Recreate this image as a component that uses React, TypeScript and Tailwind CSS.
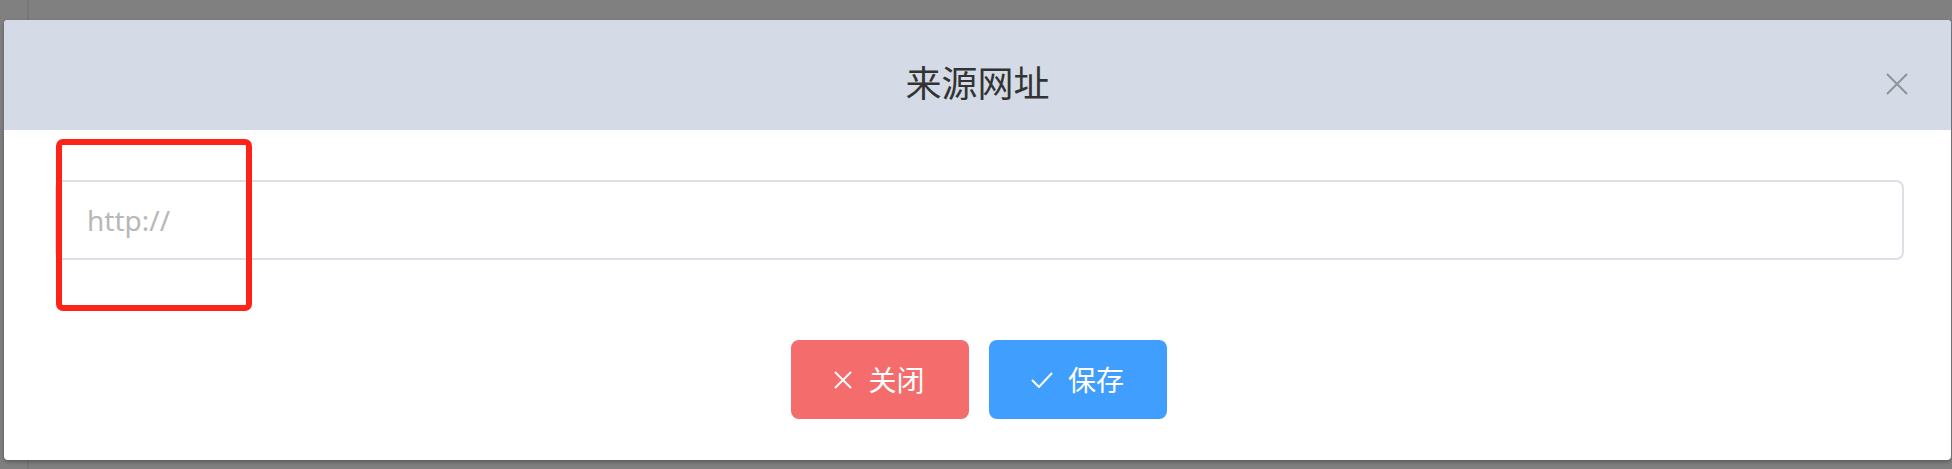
import React from "react";

const cjk = { fontFamily: '"Noto Sans", "Noto Sans CJK SC", sans-serif' };

export default function App() {
  return (
    <div className="relative h-[469px] w-[1952px] overflow-hidden bg-[#808080]" style={cjk}>
      <div className="absolute left-[27px] top-0 h-full w-[2px] bg-[#777779]" />
      <div className="relative ml-[4px] pt-[20px]">
        <div className="flex h-[440px] w-[1947px] flex-col overflow-hidden rounded-[4px] bg-white shadow-[0_2px_4px_rgba(0,0,0,0.3)]">
          <div className="relative flex h-[110px] items-start justify-center bg-[#d4dbe6] pt-[40px]">
            <span className="text-[36px] leading-[48px] text-[#333333]">来源网址</span>
            <svg className="absolute right-[43px] top-[53px]" width="22" height="22" viewBox="0 0 22 22">
              <path d="M1 1 L21 21 M21 1 L1 21" stroke="#8f939a" strokeWidth="2" fill="none" />
            </svg>
          </div>
          <div className="ml-[51px] mr-[47px] mt-[50px] flex h-[80px] items-center rounded-[8px] border-2 border-[#dcdfe6] px-[30px]">
            <span className="text-[28px] text-[#b8b8b8]">http://</span>
          </div>
          <div className="mt-[80px] flex justify-center gap-[20px] pl-[2px]">
            <button className="flex h-[79px] w-[178px] items-center justify-center gap-[16px] rounded-[8px] bg-[#f56c6c] text-[28px] text-white">
              <svg width="18" height="18" viewBox="0 0 18 18">
                <path d="M1 1 L17 17 M17 1 L1 17" stroke="#fff" strokeWidth="2" fill="none" />
              </svg>
              <span>关闭</span>
            </button>
            <button className="flex h-[79px] w-[178px] items-center justify-center gap-[15px] rounded-[8px] bg-[#409eff] text-[28px] text-white">
              <svg width="22" height="16" viewBox="0 0 22 16">
                <path d="M1 8 L8 15 L21 1" stroke="#fff" strokeWidth="2" fill="none" />
              </svg>
              <span>保存</span>
            </button>
          </div>
        </div>
      </div>
      <div className="absolute left-[56px] top-[139px] h-[172px] w-[196px] rounded-[7px] border-[6px] border-[#ff2216]" />
    </div>
  );
}
